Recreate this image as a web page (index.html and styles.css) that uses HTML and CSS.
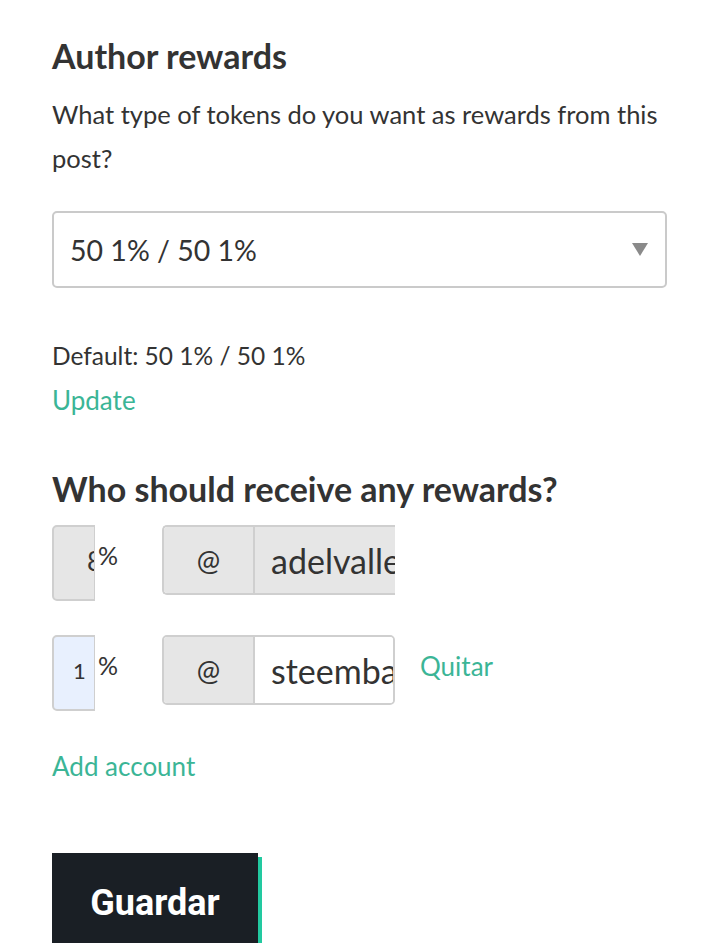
FILE: index.html
```html
<!DOCTYPE html>
<html>
<head>
<meta charset="utf-8">
<link rel="stylesheet" href="styles.css">
</head>
<body>
<div class="page">
  <h2 class="title">Author rewards</h2>
  <p class="desc">What type of tokens do you want as rewards from this post?</p>
  <div class="select">
    <span class="select-value">50 1% / 50 1%</span>
    <span class="caret"></span>
  </div>
  <div class="default">Default: 50 1% / 50 1%</div>
  <a class="link update">Update</a>

  <h2 class="title2">Who should receive any rewards?</h2>

  <div class="row">
    <div class="pct disabled"><span class="pct-val v8">8</span></div>
    <span class="pct-sign">%</span>
    <div class="group">
      <span class="at">@</span>
      <span class="acct disabled-acct"><span>adelvalle</span></span>
    </div>
  </div>

  <div class="row">
    <div class="pct autofill"><span class="pct-val v1">1</span></div>
    <span class="pct-sign">%</span>
    <div class="group rounded">
      <span class="at">@</span>
      <span class="acct"><span>steembasicincome</span></span>
    </div>
    <a class="link quitar">Quitar</a>
  </div>

  <a class="link add">Add account</a>

  <div class="actions">
    <button class="save">Guardar</button>
  </div>
</div>
</body>
</html>
```

FILE: styles.css
```css
html, body {
  margin: 0;
  padding: 0;
  background: #fff;
  overflow: hidden;
}
.page {
  padding: 0 53px 0 52px;
  font-family: Lato, "Noto Sans", sans-serif;
  color: #333;
}
.title {
  margin: 0;
  padding-top: 36px;
  font-size: 34px;
  line-height: 40px;
  font-weight: 700;
  color: #333;
}
.desc {
  margin: 16px 0 0;
  font-size: 25.5px;
  line-height: 44px;
}
.select {
  margin-top: 31px;
  height: 73px;
  border: 2px solid #cacaca;
  border-radius: 5px;
  display: flex;
  align-items: center;
  justify-content: space-between;
  padding: 0 17px 0 16px;
}
.select-value {
  font-size: 28.5px;
}
.caret {
  width: 0;
  height: 0;
  border-left: 8px solid transparent;
  border-right: 8px solid transparent;
  border-top: 13px solid #8a8a8a;
}
.default {
  margin-top: 46px;
  font-size: 24.5px;
  line-height: 44px;
}
.link {
  display: block;
  color: #3bb596;
  font-size: 26px;
  line-height: 44px;
}
.title2 {
  margin: 45px 0 0;
  font-size: 34px;
  line-height: 44px;
  font-weight: 700;
}
.row {
  display: flex;
  align-items: flex-start;
  margin-top: 14px;
}
.row + .row {
  margin-top: 34px;
}
.pct {
  width: 40px;
  height: 72px;
  border: 2px solid #cfcfcf;
  border-right-width: 1px;
  border-radius: 5px 0 0 5px;
  overflow: hidden;
  position: relative;
  font-size: 26px;
}
.pct.disabled { background: #e6e6e6; }
.pct.autofill { background: #e8f0fe; }
.pct-val {
  position: absolute;
  top: 18px;
  line-height: 32px;
}
.pct-val.v8 { left: 33px; }
.pct-val.v1 { left: 19px; font-size: 22px; }
.pct-sign {
  font-size: 25px;
  line-height: 30px;
  margin-top: 15px;
  margin-left: 3px;
  width: 64px;
}
.group {
  display: flex;
  width: 233px;
  height: 70px;
  box-sizing: border-box;
  border: 2px solid #cfcfcf;
  border-right: none;
  border-radius: 5px 0 0 5px;
  overflow: hidden;
  font-size: 34px;
}
.group.rounded {
  border-right: 2px solid #cfcfcf;
  border-radius: 5px;
}
.at {
  width: 89px;
  flex: none;
  background: #e6e6e6;
  border-right: 2px solid #cfcfcf;
  display: flex;
  align-items: center;
  justify-content: center;
  font-size: 28px;
}
.acct {
  flex: 1;
  overflow: hidden;
  white-space: nowrap;
  display: flex;
  align-items: center;
  padding-left: 16px;
  background: #fff;
}
.acct.disabled-acct { background: #e6e6e6; }
.quitar {
  margin-left: 25px;
  margin-top: 9px;
}
.add {
  margin-top: 33px;
}
.actions {
  margin-top: 65px;
}
.save {
  width: 206px;
  height: 100px;
  border: none;
  background: #1a1f25;
  color: #fff;
  font-family: Roboto, sans-serif;
  font-weight: 700;
  font-size: 36px;
  box-shadow: 4px 4px 0 #22c9a0;
  padding: 0;
}
```
